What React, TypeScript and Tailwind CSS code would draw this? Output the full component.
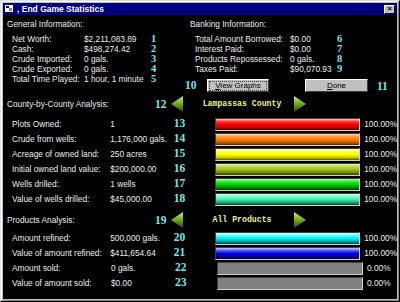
const sans = "font-['Liberation_Sans',Arial,sans-serif]";

const general = [
    ["Net Worth:", "$2,211,083.89", "1"],
    ["Cash:", "$498,274.42", "2"],
    ["Crude Imported:", "0 gals.", "3"],
    ["Crude Exported:", "0 gals.", "4"],
    ["Total Time Played:", "1 hour, 1 minute", "5"],
];

const banking = [
    ["Total Amount Borrowed:", "$0.00", "6"],
    ["Interest Paid:", "$0.00", "7"],
    ["Products Repossessed:", "0 gals.", "8"],
    ["Taxes Paid:", "$90,070.93", "9"],
];

const county = [
    ["Plots Owned:", "1", "13", "bg-[linear-gradient(to_bottom,#ffc8c8,#ff3030_25%,#ff0000_50%,#c00000_78%,#500000)]", "100.00%"],
    ["Crude from wells:", "1,176,000 gals.", "14", "bg-[linear-gradient(to_bottom,#ffd8b0,#ff9838_25%,#ff8000_50%,#c05800_78%,#5a2800)]", "100.00%"],
    ["Acreage of owned land:", "250 acres", "15", "bg-[linear-gradient(to_bottom,#ffffd0,#ffff40_25%,#ffff00_50%,#c8c800_78%,#585800)]", "100.00%"],
    ["Initial owned land value:", "$200,000.00", "16", "bg-[linear-gradient(to_bottom,#eef8b8,#b8d848_25%,#a0c020_50%,#6c8800_78%,#303c00)]", "100.00%"],
    ["Wells drilled:", "1 wells", "17", "bg-[linear-gradient(to_bottom,#b0ffb0,#30e830_25%,#00d000_50%,#009000_78%,#003800)]", "100.00%"],
    ["Value of wells drilled:", "$45,000.00", "18", "bg-[linear-gradient(to_bottom,#d0fff0,#70ffd0_25%,#40f0b0_50%,#20a070_78%,#004828)]", "100.00%"],
];

const products = [
    ["Amount refined:", "500,000 gals.", "20", "bg-[linear-gradient(to_bottom,#e8ffff,#50ffff_25%,#00f0f0_50%,#00a0a0_78%,#003c3c)]", "100.00%"],
    ["Value of amount refined:", "$411,654.64", "21", "bg-[linear-gradient(to_bottom,#c8c8ff,#5050ff_25%,#0000e8_50%,#000098_78%,#000030)]", "100.00%"],
    ["Amount sold:", "0 gals.", "22", "bg-[#808080]", "0.00%"],
    ["Value of amount sold:", "$0.00", "23", "bg-[#808080]", "0.00%"],
];

const Num = ({ n, className = "text-[11.5px]" }: { n: string; className?: string }) => (
    <span className={`font-['Liberation_Serif',serif] font-bold text-[#6ee8e8] ${className}`}>{n}</span>
);

const Arrow = ({ dir, id }: { dir: "left" | "right"; id: string }) => (
    <svg width="14" height="16" viewBox="0 0 14 16">
        <defs>
            <linearGradient id={id} x1="0" y1="0" x2="0" y2="1">
                <stop offset="0" stopColor="#c8f070" />
                <stop offset="0.45" stopColor="#78b020" />
                <stop offset="1" stopColor="#2c4800" />
            </linearGradient>
        </defs>
        <polygon points={dir === "left" ? "13,0 13,16 1,8" : "1,0 1,16 13,8"} fill={`url(#${id})`} />
    </svg>
);

const BarRow = ({ row }: { row: string[] }) => (
    <div className="flex items-center h-[15px] pl-[9px]">
        <span className="w-[99px] whitespace-nowrap">{row[0]}</span>
        <span className="w-[64px] whitespace-nowrap">{row[1]}</span>
        <span className="w-[42px]"><Num n={row[2]} /></span>
        <div className="w-[146px] h-[13px] mt-[2px] border border-t-[#404040] border-l-[#404040] border-b-[#d0d0d0] border-r-[#d0d0d0] bg-black">
            <div className={`h-full w-full ${row[3]}`}></div>
        </div>
        <span className="pl-[4px] whitespace-nowrap">{row[4]}</span>
    </div>
);

const Button = ({ label, rest, isDefault }: { label: string; rest: string; isDefault?: boolean }) => (
    <button className={`w-full h-[13px] bg-[#c0c0c0] text-black text-[8px] leading-none flex items-center justify-center border border-t-white border-l-white border-b-[#404040] border-r-[#404040] ${isDefault ? "outline outline-1 outline-black" : ""}`}>
        <span className={isDefault ? "px-[5px] border border-dotted border-[#404040]" : ""}>
            <span className="underline">{label}</span>{rest}
        </span>
    </button>
);

export default function App() {
    return (
        <div className={`w-[400px] h-[302px] border border-t-[#dfdfdf] border-l-[#dfdfdf] border-b-black border-r-black ${sans}`}>
            <div className="h-full border border-t-white border-l-white border-b-[#808080] border-r-[#808080] bg-[#c0c0c0] p-[1px] flex flex-col">
                <div className="h-[12px] bg-[#000080] flex items-center pl-[2px] pr-[2px]">
                    <svg width="9" height="8" viewBox="0 0 9 8" className="mr-[3px]">
                        <rect x="0" y="0" width="8" height="7" fill="#ffffff" />
                        <rect x="1" y="1" width="3" height="2" fill="#000080" />
                        <rect x="4" y="3" width="3" height="3" fill="#808080" />
                    </svg>
                    <span className="text-white font-bold text-[8.5px] leading-none">, End Game Statistics</span>
                    <button className="ml-auto w-[11px] h-[9px] bg-[#c0c0c0] border border-t-white border-l-white border-b-black border-r-black text-black text-[8px] leading-none font-bold flex items-center justify-center">×</button>
                </div>
                <div className="flex-1 bg-black text-[#ececec] text-[8.3px] leading-[10px]">
                    <div className="h-[80px] flex pt-[4px]">
                        <div className="w-[182px]">
                            <div className="pl-[4px] h-[10px]">General Information:</div>
                            <div className="mt-[5px]">
                                {general.map((r) => (
                                    <div key={r[0]} className="flex h-[10px] pl-[9px] items-center">
                                        <span className="w-[72px] whitespace-nowrap">{r[0]}</span>
                                        <span className="w-[67px] whitespace-nowrap">{r[1]}</span>
                                        <Num n={r[2]} className="text-[10.5px] leading-[10px]" />
                                    </div>
                                ))}
                            </div>
                        </div>
                        <div className="flex-1">
                            <div className="pl-[5px] h-[10px]">Banking Information:</div>
                            <div className="mt-[5px]">
                                {banking.map((r) => (
                                    <div key={r[0]} className="flex h-[10px] pl-[10px] items-center">
                                        <span className="w-[95px] whitespace-nowrap">{r[0]}</span>
                                        <span className="w-[47px] whitespace-nowrap">{r[1]}</span>
                                        <Num n={r[2]} className="text-[10.5px] leading-[10px]" />
                                    </div>
                                ))}
                            </div>
                            <div className="flex items-center mt-[5px] h-[13px]">
                                <span className="w-[22px]"><Num n="10" /></span>
                                <div className="w-[62px]"><Button label="V" rest="iew Graphs" isDefault /></div>
                                <div className="w-[63px] ml-[36px]"><Button label="D" rest="one" /></div>
                                <Num n="11" className="ml-[9px] text-[11.5px]" />
                            </div>
                        </div>
                    </div>
                    <div className="flex items-center h-[18px] pl-[4px]">
                        <span className="w-[148px]">County-by-County Analysis:</span>
                        <span className="w-[15px]"><Num n="12" /></span>
                        <Arrow dir="left" id="ga" />
                        <span className="w-[84px] ml-[16px] text-center font-['Liberation_Mono',monospace] font-bold text-[8.2px] text-[#f0f090]">Lampassas County</span>
                        <span className="ml-[9px]"><Arrow dir="right" id="gb" /></span>
                    </div>
                    <div className="mt-[3px]">
                        {county.map((r) => <BarRow key={r[0]} row={r} />)}
                    </div>
                    <div className="flex items-center h-[18px] pl-[4px] mt-[5px]">
                        <span className="w-[148px]">Products Analysis:</span>
                        <span className="w-[15px]"><Num n="19" /></span>
                        <Arrow dir="left" id="gc" />
                        <span className="w-[84px] ml-[16px] text-center font-['Liberation_Mono',monospace] font-bold text-[8.2px] text-[#f0f090]">All Products</span>
                        <span className="ml-[9px]"><Arrow dir="right" id="gd" /></span>
                    </div>
                    <div className="mt-[1px]">
                        {products.map((r) => <BarRow key={r[0]} row={r} />)}
                    </div>
                </div>
            </div>
        </div>
    );
}
